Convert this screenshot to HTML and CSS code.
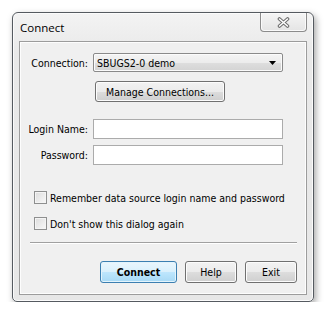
FILE: index.html
```html
<!DOCTYPE html>
<html>
<head>
<meta charset="utf-8">
<link rel="stylesheet" href="styles.css">
</head>
<body>
<div class="window">
  <div class="titlebar">
    <span class="title">Connect</span>
    <div class="close">
      <svg width="13" height="11" viewBox="0 0 13 11">
        <path d="M2.5 2 L10.5 9 M10.5 2 L2.5 9" stroke="#6e6e6e" stroke-width="3.6" stroke-linecap="round"/>
        <path d="M2.5 2 L10.5 9 M10.5 2 L2.5 9" stroke="#ffffff" stroke-width="1.5" stroke-linecap="round"/>
      </svg>
    </div>
  </div>
  <div class="panel">
    <div class="row row-conn">
      <span class="lbl">Connection:</span>
      <div class="combo">
        <span class="combo-text">SBUGS2-0 demo</span>
        <svg class="arrow" width="7" height="4" viewBox="0 0 7 4"><path d="M0 0 H7 L3.5 4 Z" fill="#000"/></svg>
      </div>
    </div>
    <div class="row row-manage">
      <button class="btn manage">Manage Connections...</button>
    </div>
    <div class="row row-login">
      <span class="lbl">Login Name:</span>
      <div class="field"></div>
    </div>
    <div class="row row-pw">
      <span class="lbl">Password:</span>
      <div class="field"></div>
    </div>
    <div class="check check-1"><span class="box"></span><span>Remember data source login name and password</span></div>
    <div class="check check-2"><span class="box"></span><span>Don't show this dialog again</span></div>
    <div class="sep"></div>
    <div class="actions">
      <button class="btn default w-connect">Connect</button>
      <button class="btn w-small">Help</button>
      <button class="btn w-small">Exit</button>
    </div>
  </div>
</div>
</body>
</html>
```
FILE: styles.css
```css
html, body {
  margin: 0;
  padding: 0;
  background: #ffffff;
}
body {
  padding: 12px 0 0 12px;
  font-family: "DejaVu Sans Condensed", "DejaVu Sans", sans-serif;
  font-size: 10.5px;
  color: #000;
}
.window {
  width: 300px;
  height: 288px;
  border: 1px solid #555a60;
  border-radius: 6px 6px 5px 5px;
  background: linear-gradient(#f3f3f3, #e9e9e9 40px, #e7e7e7);
  box-shadow: 2px 3px 7px rgba(0, 0, 0, 0.35), inset 0 0 0 1px #fbfbfb;
  display: flex;
  flex-direction: column;
}
.titlebar {
  height: 28px;
  display: flex;
  justify-content: space-between;
  align-items: flex-start;
  padding: 0 6px 0 7px;
}
.title {
  font-family: "Open Sans", "Noto Sans", sans-serif;
  font-size: 11.5px;
  line-height: 12px;
  margin-top: 9px;
  color: #000;
}
.close {
  width: 45px;
  height: 18px;
  border: 1px solid #8c8c8c;
  border-top: none;
  border-radius: 0 0 4px 4px;
  background: linear-gradient(#f5f5f5, #e4e4e4);
  box-shadow: inset 0 0 0 1px #fafafa;
  display: flex;
  align-items: center;
  justify-content: center;
}
.panel {
  flex: 1;
  margin: 0 6px 6px 6px;
  border: 1px solid #9c9c9c;
  background: #f0f0f0;
  box-shadow: inset 0 0 0 1px #fdfdfd;
  display: flex;
  flex-direction: column;
}
.row {
  display: flex;
  align-items: center;
}
.lbl {
  width: 68px;
  text-align: right;
  margin-right: 5px;
}
.row-conn {
  margin-top: 11px;
}
.combo {
  width: 188px;
  height: 17px;
  border: 1px solid #8a8a8a;
  border-radius: 2px;
  background: linear-gradient(#f4f4f4, #ececec 50%, #dedede 51%, #d3d3d3);
  box-shadow: inset 0 0 0 1px #fbfbfb;
  display: flex;
  align-items: center;
  justify-content: space-between;
  padding: 0;
}
.combo-text {
  padding-left: 3px;
}
.arrow {
  margin-right: 6px;
  margin-top: 1px;
}
.row-manage {
  margin-top: 9px;
  padding-left: 75px;
}
.btn {
  font-family: "DejaVu Sans Condensed", "DejaVu Sans", sans-serif;
  font-size: 10.5px;
  color: #000;
  border: 1px solid #707070;
  border-radius: 3px;
  background: linear-gradient(#f2f2f2, #ebebeb 50%, #dddddd 51%, #cfcfcf);
  box-shadow: inset 0 0 0 1px #fcfcfc;
  padding: 0;
  margin: 0;
}
.manage {
  width: 130px;
  height: 21px;
}
.row-login {
  margin-top: 17px;
}
.row-pw {
  margin-top: 6px;
}
.field {
  width: 188px;
  height: 18px;
  border: 1px solid #ababab;
  background: #ffffff;
}
.check {
  display: flex;
  align-items: center;
  padding-left: 14px;
  height: 13px;
}
.check-1 {
  margin-top: 26px;
}
.check-2 {
  margin-top: 13px;
}
.box {
  width: 11px;
  height: 11px;
  border: 1px solid #8e8f8f;
  background: linear-gradient(135deg, #dcdcdc, #f8f8f8);
  box-shadow: inset 0 0 0 1px #f4f4f4;
  margin-right: 3px;
  flex: none;
}
.sep {
  margin: 12px 9px 0 10px;
  height: 1px;
  background: #a0a0a0;
  box-shadow: 0 1px 0 #ffffff;
}
.actions {
  margin-top: 18px;
  display: flex;
  justify-content: flex-end;
  gap: 8px;
  padding-right: 9px;
}
.actions .btn {
  height: 22px;
}
.w-connect {
  width: 77px;
  font-weight: bold;
}
.w-small {
  width: 52px;
}
.default {
  border-color: #3c7fb1;
  background: linear-gradient(#eaf6fd, #d9f0fc 50%, #bee6fd 51%, #a7d9f5);
  box-shadow: inset 0 0 0 1px #e3f4fc;
}
```
